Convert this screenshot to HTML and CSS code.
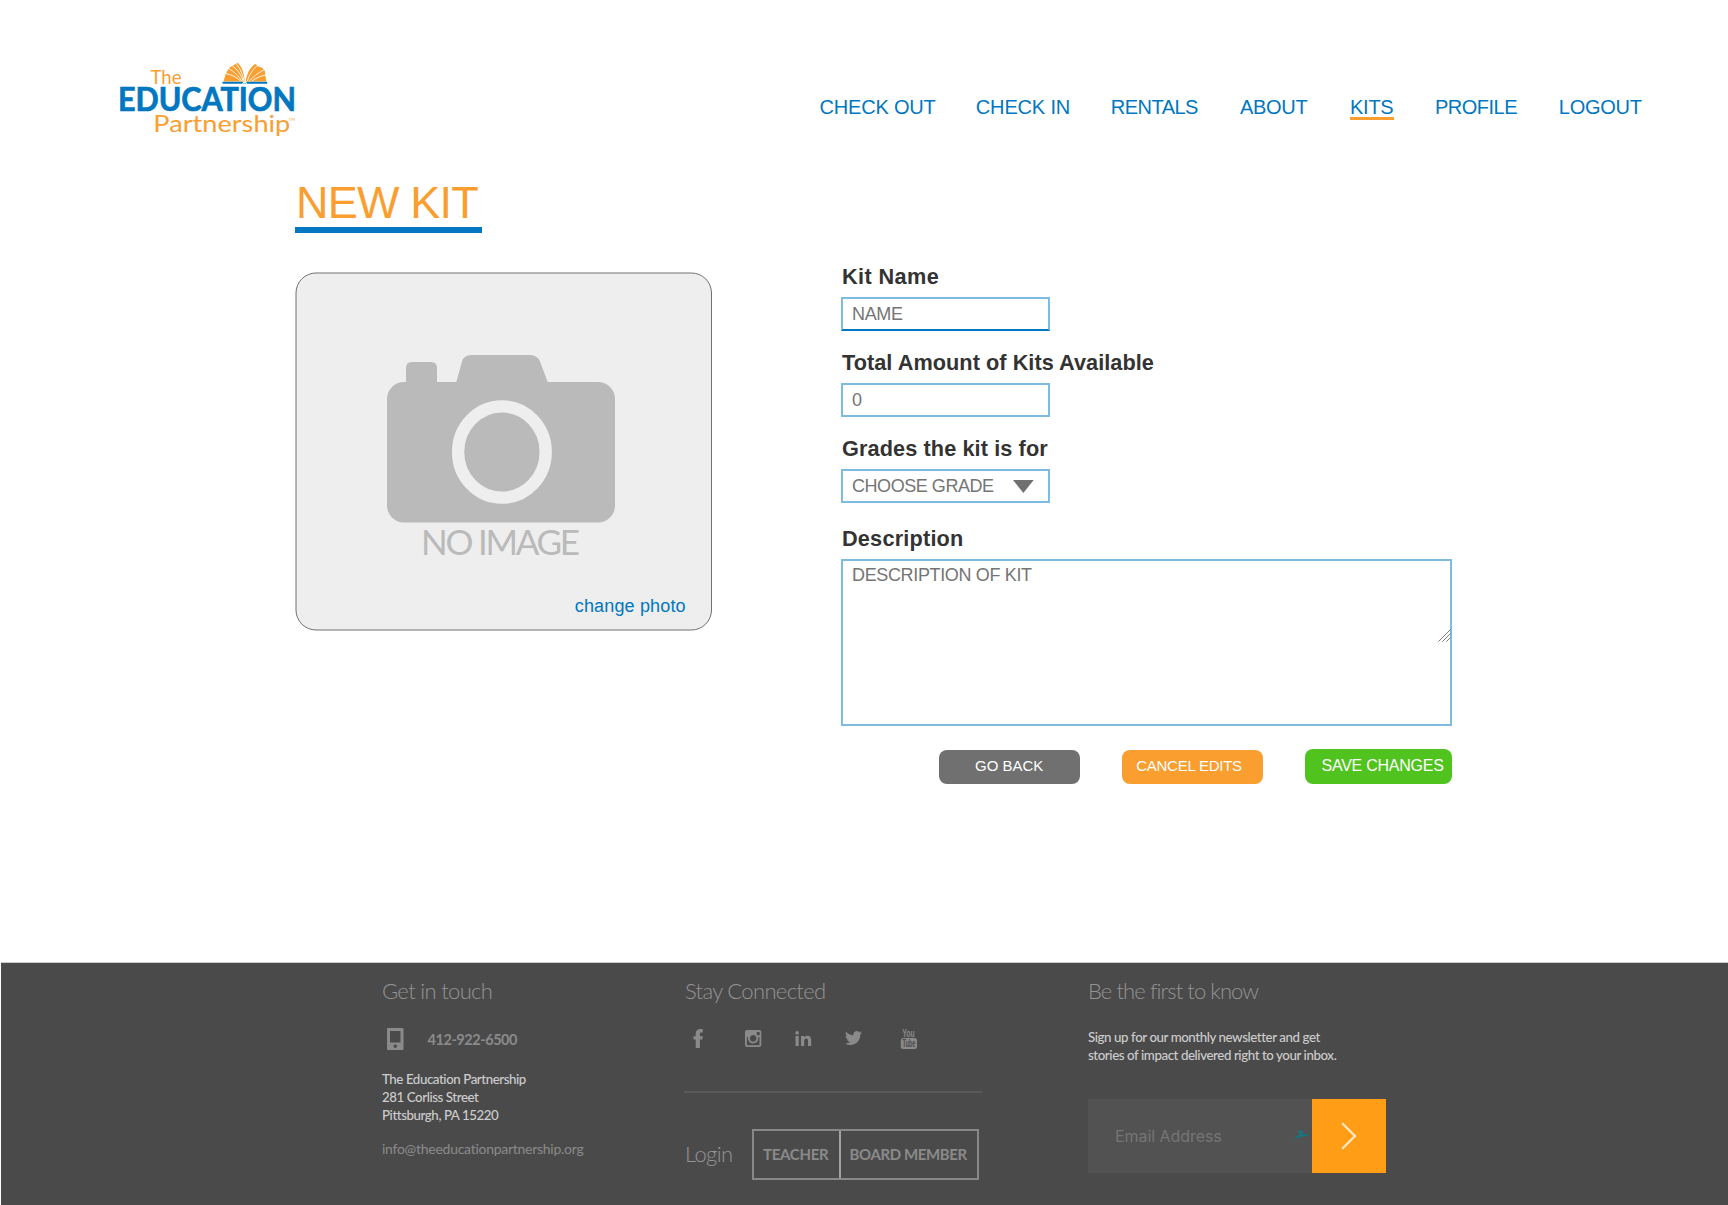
FILE: index.html
```html
<!DOCTYPE html>
<html lang="en">
<head>
<meta charset="utf-8">
<title>New Kit</title>
<link rel="stylesheet" href="styles.css">
</head>
<body>
<header class="header">
  <svg class="logo" viewBox="115 55 185 90" width="185" height="90" role="img" aria-label="The Education Partnership">
    <text class="logo-light" x="150.5" y="83.5" font-size="19.5" textLength="31" lengthAdjust="spacingAndGlyphs">The</text>
    <text class="logo-bold" x="118" y="111.4" font-size="32" textLength="178" lengthAdjust="spacingAndGlyphs">EDUCATION</text>
    <text class="logo-light" x="153.3" y="132" font-size="22.5" textLength="137" lengthAdjust="spacingAndGlyphs">Partnership</text>
    <text class="logo-light" x="288.8" y="120.5" font-size="4.5" textLength="6" lengthAdjust="spacingAndGlyphs">TM</text>
    <g fill="#f99e2f">
      <path d="M223.500 81.500L225.500 74.500L227 71.500L229.500 67.500L233.500 65.200L236 63.500L238 63C242 67 244.300 73.500 244.800 81.500Z"/>
      <path d="M245.800 81.500C246.300 75 249.500 68 254.800 64L256.800 64.700L258 66.600L262.300 67.800L264.800 71L266.300 81.500Z"/>
    </g>
    <g fill="none" stroke="#fff" stroke-width=".9">
      <path d="M235.500 63C240.500 69 243 75 244 81M232 65.500C238 70 241.500 75.500 243 81M228 68.200C234.500 72 239 76 241.500 81M225.500 73.500C231.500 74.500 236.500 77 240.500 81"/>
      <path d="M258.500 64.500C252.500 69.500 249 75 247.500 81M264.500 69.500C258 73 253 76.500 249.500 81M266 75C260 76 256 78 252 81"/>
    </g>
    <path d="M222.500 81.800H242.500A2.200 2.200 0 0 0 246.800 81.800H267.200V83.700H222.500Z" fill="#0077c0"/>
    <path d="M242.700 84.200a2 1.800 0 0 1 4 0" fill="none" stroke="#fff" stroke-width="1"/>
  </svg>
  <nav class="nav">
    <a class="n1">CHECK OUT</a>
    <a class="n2">CHECK IN</a>
    <a class="n3">RENTALS</a>
    <a class="n4">ABOUT</a>
    <a class="n5 current">KITS</a>
    <a class="n6">PROFILE</a>
    <a class="n7">LOGOUT</a>
  </nav>
</header>

<main class="main">
  <h1 class="title">NEW KIT</h1>
  <div class="content">
    <svg class="photo" viewBox="294 271 420 361" width="420" height="361">
      <rect x="296" y="273" width="415.500" height="357" rx="20" fill="#eee" stroke="#707070"/>
      <path fill="#bababa" d="M404 382H406V368Q406 362 412 362H431Q437 362 437 368V382H456.300L462 361.500Q464 355 471 355H530.500Q537 355 540 361.500L547.700 382H598A17 17 0 0 1 615 399V505.500A17 17 0 0 1 598 522.500H404A17 17 0 0 1 387 505.500V399A17 17 0 0 1 404 382Z"/>
      <ellipse cx="501.900" cy="452" rx="43.800" ry="45.700" fill="#bababa" stroke="#eee" stroke-width="12.300"/>
      <text class="no-image" x="421" y="555" textLength="159" lengthAdjust="spacing">NO IMAGE</text>
      <text class="change" x="574.800" y="611.600">change photo</text>
    </svg>
    <form class="form">
      <label class="label l1" for="name">Kit Name</label>
      <input class="input name" id="name" placeholder="NAME">
      <label class="label l2" for="total">Total Amount of Kits Available</label>
      <input class="input" id="total" placeholder="0">
      <label class="label l3">Grades the kit is for</label>
      <div class="input select"><span>CHOOSE GRADE</span>
        <svg width="21" height="13" viewBox="0 0 21 13"><path d="M0 0H20.700L10.350 13Z" fill="#707070"/></svg>
      </div>
      <label class="label l4" for="desc">Description</label>
      <div class="area-wrap">
        <textarea class="input area" id="desc" placeholder="DESCRIPTION OF KIT"></textarea>
        <svg class="grip" width="13" height="13" viewBox="0 0 13 13"><path d="M.3 12.700L12.700 .3M4.300 12.700L12.700 4.300M8.300 12.700L12.700 8.300" stroke="#707070" stroke-width=".9"/></svg>
      </div>
      <div class="actions">
        <a class="btn back">GO BACK</a>
        <a class="btn cancel">CANCEL EDITS</a>
        <a class="btn save">SAVE CHANGES</a>
      </div>
    </form>
  </div>
</main>

<footer class="footer">
  <section class="col touch">
    <h2 class="h">Get in touch</h2>
    <div class="phone">
      <svg width="17" height="22" viewBox="0 0 17 22"><path fill="#8a8a8a" fill-rule="evenodd" d="M1 0H15.500Q16.500 0 16.500 1V21Q16.500 22 15.500 22H1Q0 22 0 21V1Q0 0 1 0ZM3 3V14.500H13.500V3ZM8.250 16.500a1.700 1.700 0 1 0 .01 0Z"/></svg>
      <span>412-922-6500</span>
    </div>
    <p class="address">The Education Partnership<br>281 Corliss Street<br>Pittsburgh, PA 15220</p>
    <p class="mail">info@theeducationpartnership.org</p>
  </section>
  <section class="col connect">
    <h2 class="h">Stay Connected</h2>
    <div class="social">
      <svg width="18" height="22" viewBox="0 0 18 22"><path d="M6.700 20V11.500H4.500V8.200H6.700V6C6.700 2.800 8.500 1 11.500 1H13.800V4.400H12.300C11.300 4.400 10.900 4.900 10.900 5.800V8.200H13.800L13.400 11.500H10.900V20Z"/></svg>
      <svg width="18" height="22" viewBox="0 0 18 22"><path fill-rule="evenodd" d="M3 2H15.300Q17.300 2 17.300 4V17Q17.300 19 15.300 19H3Q1 19 1 17V4Q1 2 3 2ZM12.700 4V7.300H15.700V4ZM2.800 9V16.500Q2.800 17.300 3.600 17.300H14.700Q15.500 17.300 15.500 16.500V9H14.300A5.300 5.300 0 1 1 4 9ZM9.150 7A3.400 3.400 0 1 0 9.160 7Z"/></svg>
      <svg width="18" height="22" viewBox="0 0 18 22"><path d="M1.500 8H4.700V18H1.500ZM3.100 3A1.800 1.800 0 1 1 3.090 3ZM7 8H10.100V9.400C10.700 8.400 11.900 7.700 13.300 7.700C16.300 7.700 17.200 9.600 17.200 12.300V18H14V12.900C14 11.400 13.700 10.400 12.200 10.400S10.200 11.500 10.200 12.900V18H7Z"/></svg>
      <svg width="18" height="22" viewBox="0 0 18 22"><path transform="translate(0 1.500) scale(.71)" d="M23.953 4.570a10 10 0 01-2.825.775 4.958 4.958 0 002.163-2.723c-.951.555-2.005.959-3.127 1.184a4.920 4.920 0 00-8.384 4.482C7.690 8.095 4.067 6.130 1.640 3.162a4.822 4.822 0 00-.666 2.475c0 1.710.87 3.213 2.188 4.096a4.904 4.904 0 01-2.228-.616v.06a4.923 4.923 0 003.946 4.827 4.996 4.996 0 01-2.212.085 4.936 4.936 0 004.604 3.417 9.867 9.867 0 01-6.102 2.105c-.39 0-.779-.023-1.170-.067a13.995 13.995 0 007.557 2.209c9.053 0 13.998-7.496 13.998-13.985 0-.21 0-.42-.015-.63A9.935 9.935 0 0024 4.590z"/></svg>
      <svg width="18" height="22" viewBox="0 0 18 22"><text class="yt" x="2.200" y="8.800" font-size="11" textLength="12.600" lengthAdjust="spacingAndGlyphs">You</text><rect x=".8" y="10" width="16.200" height="11" rx="2.500"/><text class="yt yt-dark" x="2.400" y="19.300" font-size="10.500" textLength="13" lengthAdjust="spacingAndGlyphs">Tube</text></svg>
    </div>
    <hr class="rule">
    <div class="login">
      <span class="login-label">Login</span>
      <div class="login-box"><a class="teacher">TEACHER</a><a class="board">BOARD MEMBER</a></div>
    </div>
  </section>
  <section class="col news">
    <h2 class="h">Be the first to know</h2>
    <p class="blurb">Sign up for our monthly newsletter and get<br>stories of impact delivered right to your inbox.</p>
    <div class="signup">
      <div class="email"><span>Email Address</span>
        <svg width="18" height="12" viewBox="0 0 18 12"><path d="M0 11.300L4.500 8.300L6 6.200L9 4.500L7 .8L12 .5L10.800 4.600L17.500 4.300V5.400L11 6.400L6.500 8Z" fill="#0d7a85"/></svg>
      </div>
      <div class="go"><svg width="16" height="28" viewBox="0 0 16 28"><path d="M1.200 1.300L14 14L1.200 26.700" fill="none" stroke="#ffe9cb" stroke-width="2.200"/></svg></div>
    </div>
  </section>
</footer>
</body>
</html>
```
FILE: styles.css
```css
* { box-sizing: border-box; }
body { margin: 0; width: 1728px; height: 1205px; display: flex; flex-direction: column; overflow: hidden; background: #fff; font-family: "Liberation Sans", Arial, sans-serif; }
h1, h2, p { margin: 0; font-weight: 400; }
svg { overflow: visible; }

.header { height: 180px; display: flex; align-items: flex-start; padding-left: 115px; }
.logo { margin-top: 55px; }
.logo-light { font-family: Lato, sans-serif; fill: #f99e2f; }
.logo-bold { font-family: Lato, sans-serif; font-weight: 700; fill: #0077c0; stroke: #0077c0; stroke-width: .7px; }
.nav { margin: 97px 0 0 519.500px; display: grid; grid-template-columns: 156.300px 134.900px 129.300px 110px 85px 123.800px auto; color: #0077c0; font-size: 20px; line-height: 20px; white-space: nowrap; }
.n1 { letter-spacing: -.19px; }
.n2 { letter-spacing: -.15px; }
.n3 { letter-spacing: -.5px; }
.n4 { letter-spacing: -.3px; }
.n5 { letter-spacing: -.25px; }
.n6 { letter-spacing: -.5px; }
.n7 { letter-spacing: -.25px; }
.current { width: 44px; border-bottom: 3px solid #f99e2f; }

.main { height: 782px; }
.title { width: 187px; margin-left: 295px; height: 53px; padding-left: 1px; border-bottom: 6px solid #0077c0; color: #f99e2f; font-size: 45px; line-height: 45px; letter-spacing: -.8px; white-space: nowrap; }
.content { display: flex; align-items: flex-start; padding: 32px 0 0 294px; }
.photo { margin-top: 6px; }
.no-image { font: 35px Lato, sans-serif; fill: #bababa; }
.change { font-size: 18px; letter-spacing: .15px; fill: #0077c0; }

.form { width: 611px; margin-left: 127px; display: flex; flex-direction: column; }
.label { height: 24px; margin: 0 0 8px 1px; color: #333; font-size: 21.700px; font-weight: 700; line-height: 23px; white-space: nowrap; }
.l1 { letter-spacing: .4px; }
.l2 { letter-spacing: .05px; }
.l3 { letter-spacing: .1px; }
.l4 { letter-spacing: .2px; }
.input { width: 209px; height: 34px; margin: 0 0 20px; padding: 0 0 0 9px; border: 2px solid #7fbbdf; border-radius: 0; outline: 0; background: #fff; color: #757575; font: 18px/30px "Liberation Sans", Arial, sans-serif; letter-spacing: -.35px; }
.input::placeholder { color: #757575; opacity: 1; }
.name { border-bottom-color: #0077c0; }
.select { display: flex; align-items: center; justify-content: space-between; padding-right: 14px; margin-bottom: 24px; letter-spacing: -.45px; }
.area-wrap { position: relative; height: 167px; }
.area { display: block; width: 611px; height: 167px; resize: none; line-height: 29px; }
.grip { position: absolute; right: 1px; top: 70px; }
.actions { display: flex; align-items: flex-end; gap: 42px; margin: 23px 0 0 98px; color: #fff; font-size: 15px; white-space: nowrap; }
.btn { width: 141px; height: 34px; border-radius: 8px; line-height: 31px; }
.back { padding-left: 36px; background: #707070; letter-spacing: -.02px; }
.cancel { padding-left: 14.200px; background: #f99e2f; letter-spacing: -.25px; }
.save { width: 147px; height: 35px; padding-left: 16.500px; background: #50c31e; font-size: 16px; line-height: 34px; letter-spacing: -.25px; }

.footer { flex: 1; display: flex; align-items: flex-start; margin-left: 1px; padding: 15px 0 0 381px; border-top: 1px solid #cdcdcd; background: #4a4a4a; color: #8a8a8a; font-family: Lato, sans-serif; white-space: nowrap; }
.h { color: #949494; font-size: 22px; font-weight: 300; line-height: 26px; letter-spacing: -.67px; }
.touch { width: 302px; }
.connect { width: 404px; }
.phone { display: flex; gap: 23.500px; margin: 24px 0 0 5px; height: 24px; font-size: 14.500px; font-weight: 700; line-height: 24px; letter-spacing: -.45px; }
.address { margin-top: 18px; color: #cdcdcd; font-size: 13.300px; font-weight: 500; line-height: 18px; letter-spacing: -.43px; }
.mail { margin-top: 16px; font-size: 14px; line-height: 18px; letter-spacing: -.27px; }
.connect .h { padding-left: 1px; }
.social { display: grid; grid-template-columns: 55px 50px 50.500px 55px 18px; height: 22px; margin: 24px 0 0 5px; fill: #8a8a8a; }
.yt { font-family: "Liberation Sans", Arial, sans-serif; font-weight: 700; fill: #8a8a8a; }
.yt-dark { fill: #4a4a4a; }
.rule { width: 298px; height: 2px; margin: 41px 0 0; border: 0; background: #5a5a5a; }
.login { display: flex; margin-top: 36px; height: 51px; }
.login-label { width: 68px; padding-left: 1px; color: #949494; font-size: 22px; font-weight: 300; line-height: 49px; letter-spacing: -.6px; }
.login-box { display: flex; width: 227px; border: 2px solid #888; font-size: 15px; font-weight: 700; line-height: 46px; }
.teacher { width: 87px; padding-left: 9px; border-right: 2px solid #a2a2a2; letter-spacing: -.3px; }
.board { padding-left: 8.500px; letter-spacing: -.38px; }
.news .h { letter-spacing: -.91px; }
.blurb { margin-top: 24px; color: #cdcdcd; font-size: 13.300px; font-weight: 500; line-height: 18px; letter-spacing: -.42px; }
.signup { display: flex; height: 74px; margin-top: 35px; }
.email { width: 224px; display: flex; justify-content: space-between; align-items: center; padding: 0 3.500px 1px 27px; background: #525252; color: #757575; font: 16px Inter, sans-serif; letter-spacing: -.06px; }
.go { width: 73.500px; display: flex; align-items: center; padding-left: 29px; background: #ff9e16; }
```
